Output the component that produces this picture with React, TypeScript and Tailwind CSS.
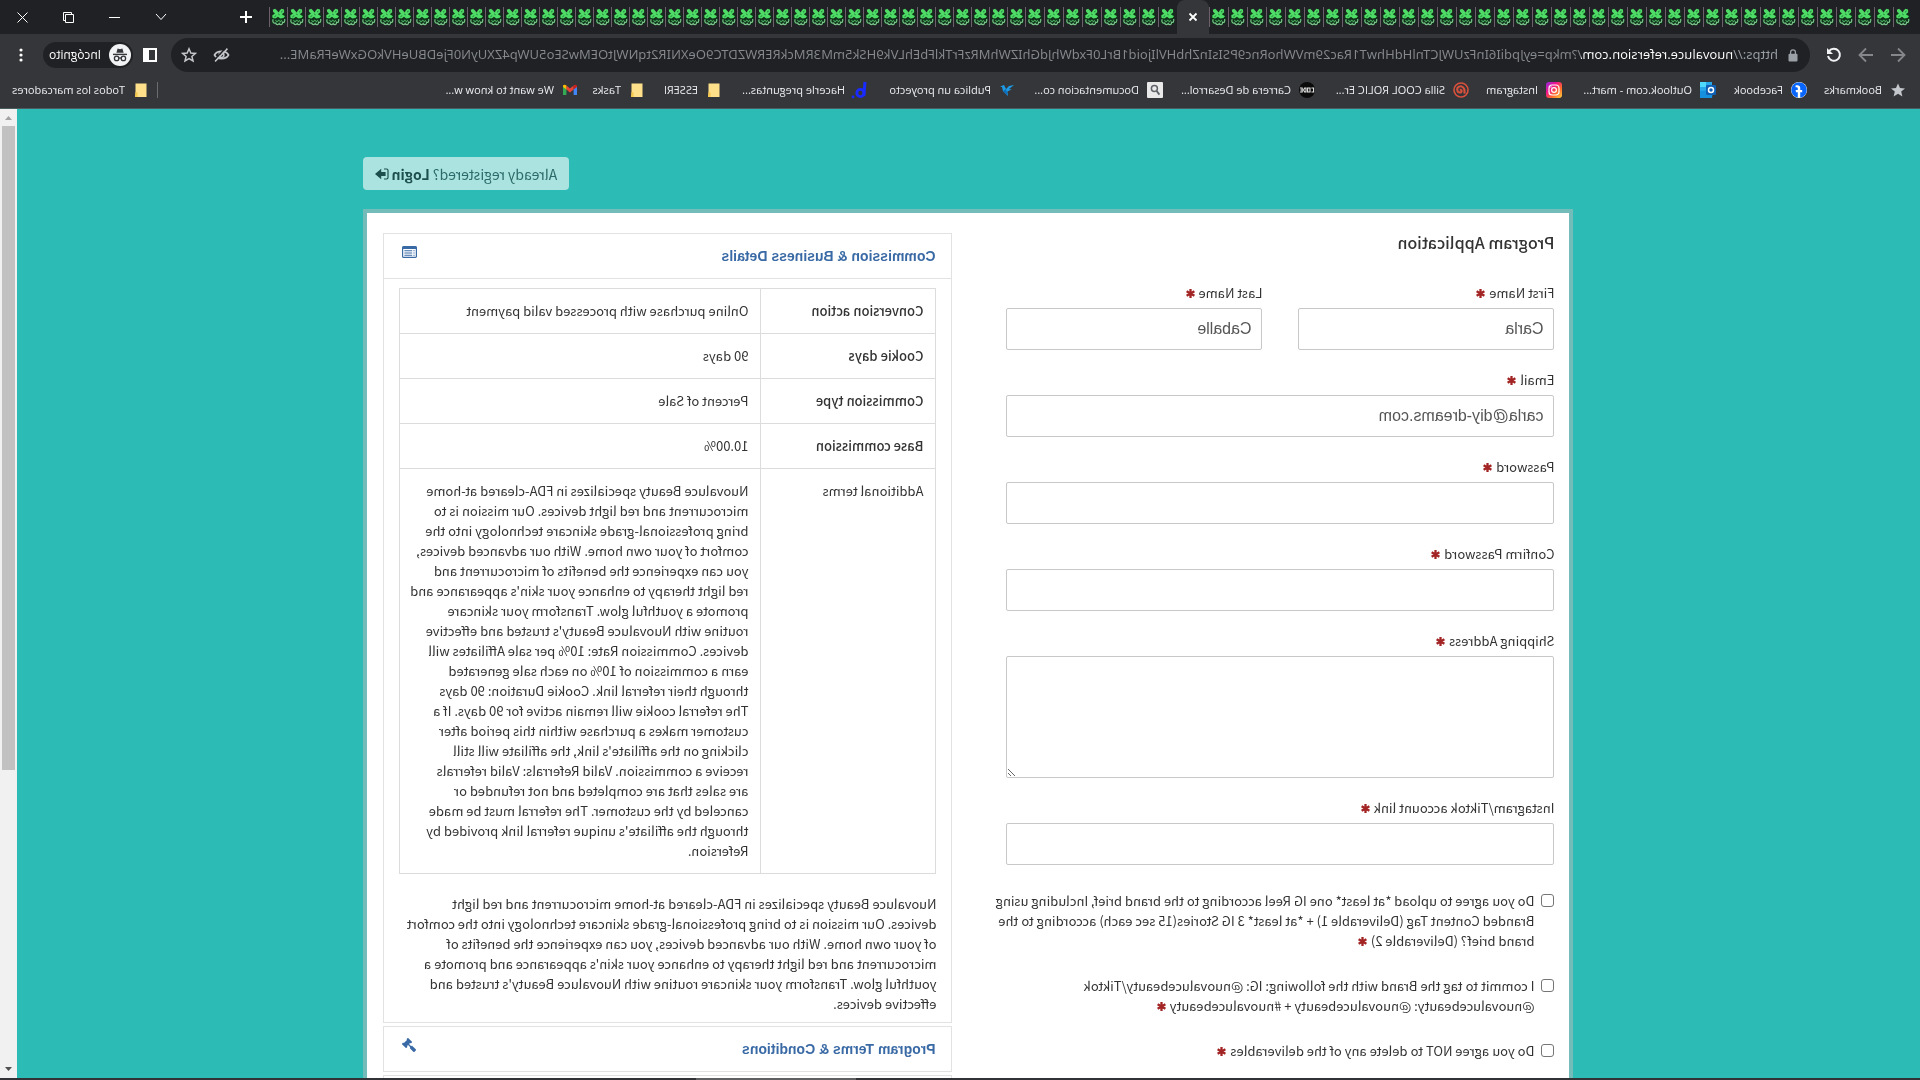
import React from 'react';
import { FaFacebook, FaGavel } from 'react-icons/fa';

// ---- icons ----
const TabFavicon = () => (
  <svg width="15" height="18" viewBox="0 0 15 18" fill="none" className="shrink-0">
    <rect x="0.5" y="5" width="14" height="11" fill="#0e3319" />
    <path d="M2 1.6 L4.6 0.8 L6.2 2.4 L7.4 4.6 L9 2.4 L10.8 0.8 L13.2 1.8 L12.8 4 L11 5.6 L13.8 7.6 L13.4 10 L10.6 10.4 L8 8.8 L5.8 10.4 L2.6 10 L1 8.2 L4.2 6.2 L1.8 4.2 Z" fill="#4fdc66" />
    <path d="M3.4 3 L5 4.2 M11.6 8.8 L9.8 7.6 M6.4 6.8 L7.8 6" stroke="#1b7a36" strokeWidth="1" />
    <path d="M1.4 11 C0.8 13.4 2 15 3.4 14.2 C3.4 17 5.8 17.4 6.8 15.6 C7.6 17.2 9.8 17 10.4 15 C12.4 15.6 14 13.6 12.8 11.2" stroke="#7cc48c" strokeWidth="1.2" />
    <path d="M4.2 12.2 L5.4 13.8 L7.2 12.2 L9 13.8 L10.6 12.2" stroke="#4aa560" strokeWidth="1.1" />
  </svg>
);
const CloseIcon = () => (
  <svg width="10" height="10" viewBox="0 0 10 10" stroke="currentColor" strokeWidth="1.8"><path d="M1.5 1.5 L8.5 8.5 M8.5 1.5 L1.5 8.5" /></svg>
);
const PlusIcon = () => (
  <svg width="14" height="14" viewBox="0 0 14 14" stroke="currentColor" strokeWidth="2"><path d="M7 1 V13 M1 7 H13" /></svg>
);
const BackIcon = () => (
  <svg width="16" height="16" viewBox="0 0 16 16" fill="none" stroke="currentColor" strokeWidth="1.8"><path d="M15 8 H2 M8 1.5 L1.5 8 L8 14.5" /></svg>
);
const ForwardIcon = () => (
  <svg width="16" height="16" viewBox="0 0 16 16" fill="none" stroke="currentColor" strokeWidth="1.8"><path d="M1 8 H14 M8 1.5 L14.5 8 L8 14.5" /></svg>
);
const ReloadIcon = () => (
  <svg width="16" height="16" viewBox="0 0 16 16" fill="none"><path d="M13 4.2 A6 6 0 1 0 14 9" stroke="currentColor" strokeWidth="2" /><path d="M15 1 V7 H9 Z" fill="currentColor" /></svg>
);
const LockIcon = () => (
  <svg width="10" height="13" viewBox="0 0 10 13" fill="none"><rect x="0.5" y="4.8" width="9" height="7.7" rx="1" fill="currentColor" /><path d="M2.6 5 V3.2 A2.4 2.4 0 0 1 7.4 3.2 V5" stroke="currentColor" strokeWidth="1.3" /></svg>
);
const EyeOffIcon = () => (
  <svg width="17" height="16" viewBox="0 0 17 16" fill="none" stroke="currentColor"><path d="M1.5 8 C4 3.2 13 3.2 15.5 8 C13 12.8 4 12.8 1.5 8 Z" strokeWidth="1.7" /><circle cx="8.5" cy="8" r="2.4" strokeWidth="1.5" /><path d="M2.6 1.6 L15 14.4" strokeWidth="1.7" /><path d="M4.4 1.2 L16.4 13.6" stroke="#202124" strokeWidth="1.4" /></svg>
);
const StarOutlineIcon = () => (
  <svg width="16" height="16" viewBox="0 0 16 16" fill="none" stroke="currentColor" strokeWidth="1.5"><path d="M8 1.8 L9.8 6 L14.4 6.4 L10.9 9.4 L12 13.9 L8 11.5 L4 13.9 L5.1 9.4 L1.6 6.4 L6.2 6 Z" /></svg>
);
const SidePanelIcon = () => (
  <svg width="14" height="14" viewBox="0 0 14 14" fill="none"><rect x="1" y="1" width="12" height="12" stroke="currentColor" strokeWidth="2" /><rect x="8" y="1" width="5" height="12" fill="currentColor" /></svg>
);
const IncognitoIcon = () => (
  <svg width="22" height="22" viewBox="0 0 22 22" fill="none">
    <circle cx="11" cy="11" r="11" fill="#f1f3f4" />
    <path d="M7.4 8.8 L8.6 4.6 L11 5.2 L13.4 4.6 L14.6 8.8 Z" fill="#35363a" />
    <path d="M4 10.4 H18" stroke="#35363a" strokeWidth="1.4" />
    <circle cx="7.6" cy="14.4" r="2.2" stroke="#35363a" strokeWidth="1.3" />
    <circle cx="14.4" cy="14.4" r="2.2" stroke="#35363a" strokeWidth="1.3" />
    <path d="M9.8 14.2 Q11 13.4 12.2 14.2" stroke="#35363a" strokeWidth="1.2" />
  </svg>
);
const DotsIcon = () => (
  <svg width="4" height="14" viewBox="0 0 4 14" fill="currentColor"><circle cx="2" cy="2" r="1.6" /><circle cx="2" cy="7" r="1.6" /><circle cx="2" cy="12" r="1.6" /></svg>
);
const ListAltIcon = () => (
  <svg width="15" height="12" viewBox="0 0 15 12" fill="none"><rect x="0.6" y="0.6" width="13.8" height="10.8" rx="1" stroke="currentColor" strokeWidth="1.2" /><rect x="0.6" y="0.6" width="13.8" height="2.4" fill="currentColor" /><path d="M2.4 4.8 H3.6 M4.8 4.8 H12.6 M2.4 7 H3.6 M4.8 7 H12.6 M2.4 9.2 H3.6 M4.8 9.2 H12.6" stroke="currentColor" strokeWidth="1.1" /></svg>
);
const SignOutIcon = () => (
  <svg width="14" height="12" viewBox="0 0 14 12" fill="none"><path d="M5 1 H2.4 Q1 1 1 2.4 V9.6 Q1 11 2.4 11 H5" stroke="currentColor" strokeWidth="1.2" /><path d="M3.4 4 H7.8 V0.8 L14 6 L7.8 11.2 V8 H3.4 Z" fill="currentColor" /></svg>
);

// ---- bookmark icons ----
const BookmarkStar = () => (
  <svg width="16" height="16" viewBox="0 0 16 16" fill="#c4c7cb"><path d="M8 1.5 L10 6 L15 6.4 L11.2 9.6 L12.4 14.5 L8 11.8 L3.6 14.5 L4.8 9.6 L1 6.4 L6 6 Z" /></svg>
);
const FacebookBadge = () => <FaFacebook size={16} className="rounded-full bg-white text-[#0866ff]" />;
const OutlookIcon = () => (
  <svg width="16" height="16" viewBox="0 0 16 16"><rect x="4" y="0" width="12" height="15" fill="#28a8ea" /><rect x="10" y="0" width="6" height="5" fill="#50d9ff" /><path d="M3 8 L16 9 V16 H4 Z" fill="#1490df" /><rect x="0" y="3" width="10" height="10" rx="1" fill="#0f5fb3" /><circle cx="5" cy="8" r="2.5" fill="none" stroke="#fff" strokeWidth="1.5" /></svg>
);
const InstagramIcon = () => (
  <svg width="16" height="16" viewBox="0 0 16 16" fill="none">
    <defs><linearGradient id="ig" x1="0" y1="1" x2="1" y2="0"><stop offset="0" stopColor="#ffd23f" /><stop offset="0.35" stopColor="#ff6a2b" /><stop offset="0.65" stopColor="#f0148c" /><stop offset="1" stopColor="#8a2be2" /></linearGradient></defs>
    <rect width="16" height="16" rx="3" fill="url(#ig)" />
    <rect x="3" y="3" width="10" height="10" rx="3" stroke="#fff" strokeWidth="1.2" />
    <circle cx="8" cy="8" r="2.4" stroke="#fff" strokeWidth="1.2" /><circle cx="11" cy="5" r="0.7" fill="#fff" />
  </svg>
);
const SillaIcon = () => (
  <svg width="16" height="16" viewBox="0 0 16 16" fill="none"><circle cx="8" cy="8" r="7" stroke="#d9513c" strokeWidth="1.6" /><path d="M4.6 11.6 C3.4 6 7 3.6 10 4.6 C13 6 12 10.6 9 10.6 C6.6 10.4 7 7.4 9.2 7.8" stroke="#d9513c" strokeWidth="2" /></svg>
);
const CodeIcon = () => (
  <svg width="16" height="16" viewBox="0 0 16 16" fill="none"><circle cx="8" cy="8" r="8" fill="#0a0a0a" /><path d="M3.6 6 H1.4 V10 H3.6 M5 6 H7.4 V10 H5 Z M9 6 H10.4 L11.4 8 L10.4 10 H9 Z M15 6 H12.8 V10 H15 M12.8 8 H14.6" stroke="#e8e8e8" strokeWidth="1.1" /></svg>
);
const DocIcon = () => (
  <svg width="16" height="16" viewBox="0 0 16 16" fill="none"><rect width="16" height="16" rx="1" fill="#e9e9e9" /><circle cx="8.6" cy="6.4" r="3" stroke="#5f6368" strokeWidth="1.5" /><path d="M6.6 8.6 L3.6 12.6" stroke="#5f6368" strokeWidth="1.8" /></svg>
);
const BirdIcon = () => (
  <svg width="16" height="16" viewBox="0 0 16 16"><path d="M1 3 L6 4 L9 7 L11 3 L15 4.4 L13 5 L12 9 L7 14 L7.6 9.4 L3.4 7.4 L6 7 Z" fill="#1e9be6" /><path d="M9 7 L12 9 L7 14 Z" fill="#0f6db8" /></svg>
);
const BlueBIcon = () => (
  <svg width="18" height="18" viewBox="0 0 18 18" fill="none"><path d="M4 1 L5.2 15" stroke="#1a2bff" strokeWidth="3" /><circle cx="8.6" cy="12" r="3.6" stroke="#1a2bff" strokeWidth="2.8" /><circle cx="16" cy="16" r="1.4" fill="#1a2bff" /></svg>
);
const FolderIcon = () => (
  <svg width="16" height="16" viewBox="0 0 16 16"><path d="M2.5 1.5 H13.5 V12 L14 15 H2.5 Z" fill="#ffe08a" /><path d="M11.5 15 V10.5 L13.5 10 L14 15 Z" fill="#f5c84c" /></svg>
);
const GmailIcon = () => (
  <svg width="16" height="16" viewBox="0 0 16 16"><path d="M1 4 V13 H4.4 V6.6 Z" fill="#4285f4" /><path d="M15 4 V13 H11.6 V6.6 Z" fill="#34a853" /><path d="M4.4 3.6 L8 6.4 L11.6 3.6 V7.6 L8 10.4 L4.4 7.6 Z" fill="#ea4335" /><path d="M1 3.6 Q2.4 1.8 4.4 3.6 V7.6 L1 5 Z" fill="#c5221f" /><path d="M15 3.6 Q13.6 1.8 11.6 3.6 V7.6 L15 5 Z" fill="#fbbc04" /></svg>
);

interface Bookmark {
  label: string;
  icon: React.ReactNode;
  width: string;
}

const bookmarks: Bookmark[] = [
  { label: 'Bookmarks', icon: <BookmarkStar />, width: 'w-[99px]' },
  { label: 'Facebook', icon: <FacebookBadge />, width: 'w-[91px]' },
  { label: 'Outlook.com - mart...', icon: <OutlookIcon />, width: 'w-[154px]' },
  { label: 'Instagram', icon: <InstagramIcon />, width: 'w-[93px]' },
  { label: 'Silla COOL ROLIC Er...', icon: <SillaIcon />, width: 'w-[154px]' },
  { label: 'Carrera de Desarrol...', icon: <CodeIcon />, width: 'w-[152px]' },
  { label: 'Documentacion co...', icon: <DocIcon />, width: 'w-[148px]' },
  { label: 'Publica un proyecto', icon: <BirdIcon />, width: 'w-[146px]' },
  { label: 'Hacerle preguntas...', icon: <BlueBIcon />, width: 'w-[147px]' },
  { label: 'ESSERI', icon: <FolderIcon />, width: 'w-[77px]' },
  { label: 'Tasks', icon: <FolderIcon />, width: 'w-[67px]' },
  { label: 'We want to know w...', icon: <GmailIcon />, width: 'w-[150px]' },
];

const PAGE_URL = 'https://nuovaluce.refersion.com/?mkp=eyJpdiI6InFzUWJCTnlHdHhwT1Rac29mVWhoRnc9PSIsInZhbHVlIjoid1BrL0FxdWhJdGhIZWhMRzFrTklFbEhLVk9HSk5mM3RMckRERWZDTC9OeXNIR2tqNWJtOEMwSEo5UWp4ZXUyN0FjeDBUeHVkOGxWeFRaME...';

const TabGroup: React.FC<{ count: number; tabWidth: string }> = ({ count, tabWidth }) => (
  <>
    {Array.from({ length: count }, (_, i) => (
      <button key={i} aria-label="Tab" className={`${tabWidth} h-5 shrink-0 flex items-center justify-end pr-px border-r border-[#6d5f6b]`}>
        <TabFavicon />
      </button>
    ))}
  </>
);

const TabStrip = () => (
  <div className="h-[34px] bg-[#202124] flex items-center pl-2 text-white">
    <TabGroup count={37} tabWidth="w-[19px]" />
    <div className="w-8 h-full shrink-0 rounded-t-lg bg-[#35363a] flex items-center justify-center">
      <button aria-label="Close tab"><CloseIcon /></button>
    </div>
    <TabGroup count={8} tabWidth="w-[19px]" />
    <TabGroup count={42} tabWidth="w-[18px]" />
    <button aria-label="New tab" className="ml-4"><PlusIcon /></button>
    <div className="ml-auto flex h-7 items-center">
      <button aria-label="Search tabs" className="w-[46px] flex justify-center">
        <svg width="12" height="8" viewBox="0 0 12 8" fill="none" stroke="currentColor"><path d="M1 1 L6 6.5 L11 1" /></svg>
      </button>
      <button aria-label="Minimize" className="w-[46px] flex justify-center">
        <svg width="11" height="11" viewBox="0 0 11 11" fill="none" stroke="currentColor"><path d="M0 5.5 H11" /></svg>
      </button>
      <button aria-label="Restore" className="w-[46px] flex justify-center">
        <svg width="11" height="11" viewBox="0 0 11 11" fill="none" stroke="currentColor"><path d="M0.5 2.5 H8.5 V10.5 H0.5 Z M2.5 2.5 V0.5 H10.5 V8.5 H8.5" /></svg>
      </button>
      <button aria-label="Close" className="w-[46px] flex justify-center">
        <svg width="11" height="11" viewBox="0 0 11 11" fill="none" stroke="currentColor"><path d="M0.5 0.5 L10.5 10.5 M10.5 0.5 L0.5 10.5" /></svg>
      </button>
    </div>
  </div>
);

const Toolbar = () => (
  <div className="h-[42px] bg-[#35363a] flex items-center pl-3.5 pr-[19px]">
    <button aria-label="Back" className="mr-4 text-[#85878b]"><BackIcon /></button>
    <button aria-label="Forward" className="mr-4 text-[#85878b]"><ForwardIcon /></button>
    <button aria-label="Reload" className="mr-4 text-[#f1f3f4]"><ReloadIcon /></button>
    <div className="flex-1 h-[34px] rounded-full bg-[#202124] flex items-center pl-3 pr-[10px] text-[#9aa0a6]">
      <LockIcon />
      <input
        aria-label="Address"
        readOnly
        value={PAGE_URL}
        className="flex-1 min-w-0 ml-2.5 mr-4 font-['Noto_Sans',sans-serif] text-[13px] outline-none text-transparent bg-clip-text bg-[linear-gradient(90deg,#9aa0a6_46px,#fff_46px,#fff_197px,#85898e_197px)]"
      />
      <button aria-label="Third-party cookies blocked" className="mr-4 text-[#c4c7cb]"><EyeOffIcon /></button>
      <button aria-label="Bookmark this page" className="text-[#c4c7cb]"><StarOutlineIcon /></button>
    </div>
    <button aria-label="Side panel" className="ml-3.5 text-white"><SidePanelIcon /></button>
    <button className="ml-2.5 w-[90px] h-[26px] rounded-full bg-[#202124] flex items-center gap-2 pl-0.5 text-xs text-white">
      <IncognitoIcon />
      Incógnito
    </button>
    <button aria-label="Menu" className="ml-5 text-white"><DotsIcon /></button>
  </div>
);

const BookmarksBar = () => (
  <div className="h-[33px] bg-[#35363a] border-b border-[#4a5c5e] flex items-center pl-3.5 pr-3 pb-1 text-[11px] text-[#eceef0]">
    {bookmarks.map(b => (
      <a key={b.label} href="#" className={`${b.width} shrink-0 flex items-center whitespace-nowrap`}>
        <span className="w-6 shrink-0 flex">{b.icon}</span>
        {b.label}
      </a>
    ))}
    <a href="#" className="ml-auto flex items-center border-l border-[#6a6c70] pl-2 whitespace-nowrap">
      <span className="w-6 shrink-0 flex"><FolderIcon /></span>
      Todos los marcadores
    </a>
  </div>
);

// ---- page ----
const Required = () => (
  <svg width="9" height="9" viewBox="0 0 9 9" className="inline ml-1 align-baseline" stroke="#a32424" strokeWidth="2.3">
    <path d="M4.5 0 V9 M0.6 2.2 L8.4 6.8 M8.4 2.2 L0.6 6.8" />
  </svg>
);

const Field: React.FC<{ id: string; label: string; value?: string; type?: string }> = ({ id, label, value = '', type = 'text' }) => (
  <div>
    <label htmlFor={id} className="block mb-[5px]">{label}<Required /></label>
    <input
      id={id}
      type={type}
      defaultValue={value}
      className="block w-full h-[42px] px-2.5 border border-[#c8c8c8] rounded-xs font-['Liberation_Sans',sans-serif] text-base text-[#555]"
    />
  </div>
);

const Check: React.FC<{ id: string; label: string }> = ({ id, label }) => (
  <div className="flex gap-[7px]">
    <input id={id} type="checkbox" className="appearance-none shrink-0 mt-[3px] w-[13px] h-[13px] bg-white border border-[#767676] rounded-[3px]" />
    <label htmlFor={id}>{label}<Required /></label>
  </div>
);

const ApplicationForm = () => (
  <form className="flex-1 min-w-0">
    <h1 className="h-5 mt-[19px] mb-[31px] text-base leading-5 font-medium">Program Application</h1>
    <div className="flex flex-col gap-5 pr-[54px]">
      <div className="grid grid-cols-2 gap-9">
        <Field id="first" label="First Name" value="Carla" />
        <Field id="last" label="Last Name" value="Caballe" />
      </div>
      <Field id="email" label="Email" value="carla@diy-dreams.com" />
      <Field id="password" label="Password" type="password" />
      <Field id="confirm" label="Confirm Password" type="password" />
      <div>
        <label htmlFor="address" className="block mb-[5px]">Shipping Address<Required /></label>
        <textarea id="address" className="block w-full h-[122px] border border-[#c8c8c8] rounded-xs" />
      </div>
      <Field id="social" label="Instagram/Tiktok account link" />
    </div>
    <div className="flex flex-col gap-[25px] mt-[26px] pr-4">
      <Check id="c1" label="Do you agree to upload *at least* one IG Reel according to the brand brief, Including using Branded Content Tag (Deliverable 1) + *at least* 3 IG Stories(15 sec each) according to the brand brief? (Deliverable 2)" />
      <Check id="c2" label="I commit to tag the Brand with the following: IG: @nuovalucebeauty/Tiktok @nuovalucebeauty: @nuovalucebeauty + #nuovalucebeauty" />
      <Check id="c3" label="Do you agree NOT to delete any of the deliverables" />
    </div>
  </form>
);

const ADDITIONAL_TERMS = `Nuovaluce Beauty specializes in FDA-cleared at-home
microcurrent and red light devices. Our mission is to
bring professional-grade skincare technology into the
comfort of your own home. With our advanced devices,
you can experience the benefits of microcurrent and
red light therapy to enhance your skin's appearance and
promote a youthful glow. Transform your skincare
routine with Nuovaluce Beauty's trusted and effective
devices. Commission Rate: 10% per sale Affiliates will
earn a commission of 10% on each sale generated
through their referral link. Cookie Duration: 90 days
The referral cookie will remain active for 90 days. If a
customer makes a purchase within this period after
clicking on the affiliate's link, the affiliate will still
receive a commission. Valid Referrals: Valid referrals
are sales that are completed and not refunded or
canceled by the customer. The referral must be made
through the affiliate's unique referral link provided by
Refersion.`;

const ABOUT = `Nuovaluce Beauty specializes in FDA-cleared at-home microcurrent and red light
devices. Our mission is to bring professional-grade skincare technology into the comfort
of your own home. With our advanced devices, you can experience the benefits of
microcurrent and red light therapy to enhance your skin's appearance and promote a
youthful glow. Transform your skincare routine with Nuovaluce Beauty's trusted and
effective devices.`;

const details = [
  ['Conversion action', 'Online purchase with processed valid payment'],
  ['Cookie days', '90 days'],
  ['Commission type', 'Percent of Sale'],
  ['Base commission', '10.00%'],
];

const Panel: React.FC<{ title?: string; icon?: React.ReactNode; children?: React.ReactNode }> = ({ title, icon, children }) => (
  <section className="border border-[#e2e2e2]">
    <h2 className="h-11 flex justify-between items-center px-4 text-[#3a6aa5] font-['Liberation_Sans',sans-serif] font-bold text-sm">
      <a href="#">{title}</a>
      <span className="-mt-2 mr-0.5">{icon}</span>
    </h2>
    {children}
  </section>
);

const DetailsColumn = () => (
  <div className="w-[569px] shrink-0 mt-5 flex flex-col gap-[3px]">
    <Panel title="Commission & Business Details" icon={<ListAltIcon />}>
      <div className="border-t border-[#e2e2e2] px-[15px] pt-[9px] pb-2">
        <table className="w-full border-collapse [&_td]:border [&_td]:border-[#dcdcdc] [&_td]:align-top [&_td]:py-3 [&_td]:pl-3 [&_td]:pr-2">
          <tbody>
            {details.map(([name, value]) => (
              <tr key={name}>
                <td className="w-[175px] font-medium">{name}</td>
                <td>{value}</td>
              </tr>
            ))}
            <tr>
              <td>Additional terms</td>
              <td className="whitespace-pre-line">{ADDITIONAL_TERMS}</td>
            </tr>
          </tbody>
        </table>
        <p className="mt-5 whitespace-pre-line">{ABOUT}</p>
      </div>
    </Panel>
    <Panel title="Program Terms & Conditions" icon={<FaGavel size={14} />} />
    <Panel />
  </div>
);

const Scrollbar = () => (
  <div className="w-[17px] shrink-0 bg-[#f1f1f1] flex flex-col items-center">
    <svg width="17" height="17" viewBox="0 0 17 17"><path d="M5 11 L8.5 7 L12 11 Z" fill="#a3a3a3" /></svg>
    <div className="w-[13px] h-[644px] bg-[#c1c1c1]" />
    <svg width="17" height="17" viewBox="0 0 17 17" className="mt-auto"><path d="M5 6 L8.5 10 L12 6 Z" fill="#505050" /></svg>
  </div>
);

const App: React.FC = () => {
  return (
    <div className="h-screen flex flex-col overflow-hidden -scale-x-100 font-['Open_Sans',sans-serif]">
      <TabStrip />
      <Toolbar />
      <BookmarksBar />
      <div className="flex-1 min-h-0 flex">
        <main className="flex-1 min-w-0 overflow-hidden bg-[#2dbbb5] font-['Noto_Sans_CJK_SC',sans-serif] text-[13px] leading-5 text-[#333]">
          <div className="max-w-[1210px] mx-auto pt-12">
            <div className="flex justify-end">
              <a href="#" className="h-[33px] flex items-center px-3 rounded bg-[#abe3e0] text-sm text-[#2c6b69]">
                Already registered?&nbsp;<b className="text-[#1c4f4e]">Login</b>
                <span className="ml-0.5 text-[#1c4f4e]"><SignOutIcon /></span>
              </a>
            </div>
            <div className="mt-[19px] border-4 border-[#74bcb9] bg-white pl-[15px] pr-4 flex">
              <ApplicationForm />
              <DetailsColumn />
            </div>
          </div>
        </main>
        <Scrollbar />
      </div>
      <div className="h-0.5 shrink-0 bg-[#303236] flex justify-center">
        <div className="w-40 ml-[368px] bg-[#5f6062]" />
      </div>
    </div>
  );
};

export default App;
